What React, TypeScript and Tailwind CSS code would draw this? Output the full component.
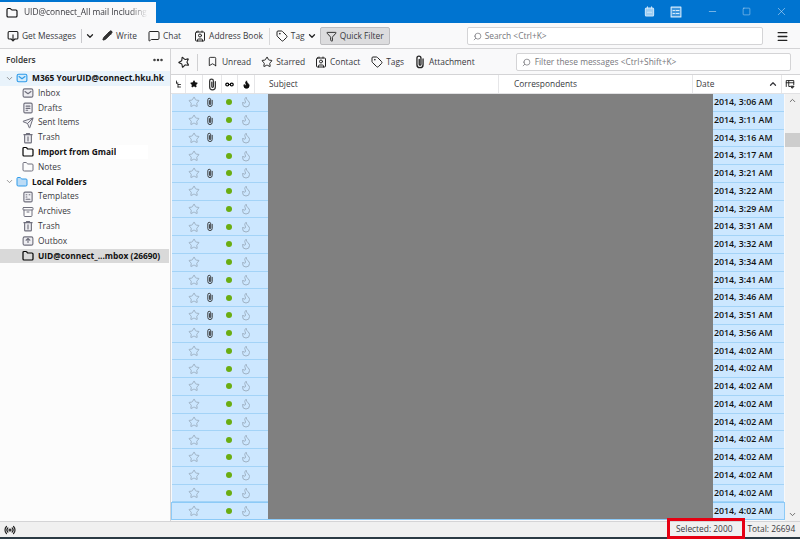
import React from 'react';
import {
  Archive, ChevronDown, ChevronUp, Filter, Flame, Folder, Menu, MessageSquare, Minus, MoreHorizontal,
  Pencil, Search, Send, Square, Star, Tag, X, Bookmark, Contact, Radio,
} from 'lucide-react';

const FONT = 'font-["Open_Sans","Liberation_Sans",sans-serif]';

const messages: { time: string; clip?: boolean }[] = [
  { time: '3:06 AM', clip: true },
  { time: '3:11 AM', clip: true },
  { time: '3:16 AM', clip: true },
  { time: '3:17 AM' },
  { time: '3:21 AM', clip: true },
  { time: '3:22 AM' },
  { time: '3:29 AM' },
  { time: '3:31 AM', clip: true },
  { time: '3:32 AM' },
  { time: '3:34 AM' },
  { time: '3:41 AM', clip: true },
  { time: '3:46 AM', clip: true },
  { time: '3:51 AM', clip: true },
  { time: '3:56 AM', clip: true },
  ...Array.from({ length: 10 }, () => ({ time: '4:02 AM' })),
];

// small hand drawn icons, the packages have nothing close for these
function Clip({ size = 11, className }: { size?: number; className?: string }) {
  return (
    <svg width={size} height={size} viewBox="0 0 16 16" fill="none" stroke="currentColor" strokeWidth="1.5" strokeLinecap="round" className={className}>
      <path d="M11.5 4.5V11a3.5 3.5 0 0 1-7 0V3.6a2.3 2.3 0 0 1 4.6 0V10.5a1 1 0 0 1-2 0V5" />
    </svg>
  );
}

function Box({ size = 12, className, children }: { size?: number; className?: string; children: React.ReactNode }) {
  return (
    <svg width={size} height={size} viewBox="0 0 16 16" fill="none" stroke="currentColor" strokeWidth="1.5" strokeLinejoin="round" strokeLinecap="round" className={className}>
      {children}
    </svg>
  );
}

const InboxIcon = () => (
  <Box className="text-[#6f6f7c]">
    <rect x="1.5" y="2.5" width="13" height="11" rx="2" fill="#eeeef2" />
    <path d="M4 6l4 3 4-3" />
  </Box>
);
const DraftIcon = () => (
  <Box className="text-[#6f6f7c]">
    <rect x="2.5" y="1.5" width="11" height="13" rx="1.5" fill="#eeeef2" />
    <path d="M5.5 5.5h5M5.5 8.5h5M5.5 11h2" />
  </Box>
);
const TrashIcon = () => (
  <Box className="text-[#6f6f7c]">
    <path d="M2.5 3.5h11M6 3.5V2h4v1.5" />
    <rect x="3.5" y="3.5" width="9" height="11" rx="1" fill="#eeeef2" />
    <path d="M8 6.5v5.5" />
  </Box>
);
const TemplateIcon = () => (
  <Box className="text-[#6f6f7c]">
    <rect x="2.5" y="1.5" width="11" height="13" rx="1.5" fill="#eeeef2" />
    <path d="M5.5 5h1M9.5 5h1M5.5 8h1M5.5 11h5" />
  </Box>
);
const OutboxIcon = () => (
  <Box className="text-[#6f6f7c]">
    <rect x="1.5" y="2.5" width="13" height="11" rx="2" fill="#eeeef2" />
    <path d="M8 10V5M5.5 7L8 4.5 10.5 7" />
  </Box>
);

export default function App() {
  const dark = 'text-[#222]';
  return (
    <div className={`flex h-[539px] w-[800px] flex-col overflow-hidden bg-[#f9f9fa] ${FONT}`}>
      {/* title bar */}
      <div className="flex h-[23px] shrink-0 items-end bg-[#0074d0] text-white">
        <div className="flex h-[21px] w-[156px] items-center gap-[6px] bg-[#f9f9fa] pl-[6px] text-[8.4px] text-[#38383d]">
          <Folder size={12} strokeWidth={2.2} className="text-black" />
          <span className="w-[124px] overflow-hidden whitespace-nowrap [mask-image:linear-gradient(to_right,black_85%,transparent)]">
            UID@connect_All mail Including
          </span>
        </div>
        <div className="flex h-[23px] flex-1 items-center">
          <Box size={11} className="ml-[488px] text-[#cde6fa]">
            <rect x="2" y="3" width="12" height="11.5" rx="1.5" fill="#9ccdf2" />
            <path d="M5 1v3M11 1v3M5 9h6" />
          </Box>
          <Box size={12} className="ml-[15px] text-[#d6ebfb]">
            <rect x="1.5" y="1.5" width="13" height="13" fill="#3f97de" />
            <path d="M4 6h2M8 6h4M4 10h2M8 10h4" />
          </Box>
          <Minus size={11} strokeWidth={1} className="ml-[25px]" />
          <Square size={9} strokeWidth={1} className="ml-[24px]" />
          <X size={13} strokeWidth={1} className="ml-[24px] text-[#cfe4f7]" />
        </div>
      </div>

      {/* main toolbar */}
      <div className="flex h-[26px] shrink-0 items-center border-b border-[#d4d4d6] pl-[7px] pt-[1px] text-[8.4px] text-[#38383d]">
        <div className="flex items-center gap-[3px]">
          <Box size={12} className={dark}>
            <path d="M5 12H3a1.5 1.5 0 0 1-1.5-1.5v-7A1.5 1.5 0 0 1 3 2h10a1.5 1.5 0 0 1 1.5 1.5v7A1.5 1.5 0 0 1 13 12h-2" />
            <path d="M8 6.5v8M5.5 12L8 14.500 10.500 12" />
          </Box>
          <span>Get Messages</span>
        </div>
        <div className="ml-[5px] h-[14px] w-px bg-[#c8c8cc]" />
        <ChevronDown size={10} strokeWidth={3} className={`ml-[3px] ${dark}`} />
        <div className="ml-[7px] flex items-center gap-[3px]">
          <Pencil size={11} fill="#333" className={dark} />
          <span>Write</span>
        </div>
        <div className="ml-[11px] flex items-center gap-[3px]">
          <MessageSquare size={12} className={dark} />
          <span>Chat</span>
        </div>
        <div className="ml-[13px] flex items-center gap-[3px]">
          <Contact size={12} className={dark} />
          <span>Address Book</span>
        </div>
        <div className="ml-[6px] h-[17px] w-px bg-[#d8d8da]" />
        <div className="ml-[6px] flex items-center gap-[3px]">
          <Tag size={12} className={dark} />
          <span>Tag</span>
        </div>
        <ChevronDown size={10} strokeWidth={3} className={`ml-[2px] ${dark}`} />
        <div className="ml-[3px] flex h-[18px] w-[70px] items-center gap-[3px] rounded-[2px] border border-[#bdbdc0] bg-[#dcdcde] pl-[5px]">
          <Filter size={11} className={dark} />
          <span>Quick Filter</span>
        </div>
        <div className="ml-[77px] flex h-[18px] w-[296px] items-center gap-[3px] rounded-[2px] border border-[#d4d4d6] bg-white pl-[5px] text-[#77777c]">
          <Search size={9} className="-scale-x-100" />
          <span>Search &lt;Ctrl+K&gt;</span>
        </div>
        <Menu size={13} strokeWidth={2.4} className={`ml-[13px] ${dark}`} />
      </div>

      <div className="flex min-h-0 flex-1">
        {/* folder pane */}
        <div className="flex w-[171px] shrink-0 flex-col border-r border-[#d4d4d6] bg-[#fcfcfc] text-[8.4px] text-[#38383d]">
          <div className="flex h-[22px] shrink-0 items-center justify-between px-[6px] font-semibold text-[#333]">
            <span>Folders</span>
            <MoreHorizontal size={12} strokeWidth={3} className="text-[#333]" />
          </div>
          <div className="flex h-[14.8px] items-center bg-[#e9f3fb] pl-[5px] font-bold text-[#111]">
            <ChevronDown size={9} className="mr-[2px] text-[#777]" />
            <Box size={12} className="mr-[4px] text-[#2e9bea]">
              <rect x="1.5" y="3" width="13" height="10" rx="2" fill="#d3ebfb" />
              <path d="M4 6l4 3 4-3" />
            </Box>
            <span>M365 YourUID@connect.hku.hk</span>
          </div>
          <div className="flex h-[14.8px] items-center gap-[4px] pl-[22px]"><InboxIcon /><span>Inbox</span></div>
          <div className="flex h-[14.8px] items-center gap-[4px] pl-[22px]"><DraftIcon /><span>Drafts</span></div>
          <div className="flex h-[14.8px] items-center gap-[4px] pl-[22px]"><Send size={12} fill="#eeeef2" className="text-[#6f6f7c]" /><span>Sent Items</span></div>
          <div className="flex h-[14.8px] items-center gap-[4px] pl-[22px]"><TrashIcon /><span>Trash</span></div>
          <div className="flex h-[14.8px] items-center gap-[4px] pl-[22px] font-bold text-[#111]">
            <Folder size={12} strokeWidth={2.4} className="text-black" />
            <span>Import from Gmail</span>
            <span className="-ml-[4px] h-[14px] w-[32px] bg-white" />
          </div>
          <div className="flex h-[14.8px] items-center gap-[4px] pl-[22px]"><Folder size={12} className="text-[#6f6f7c]" /><span>Notes</span></div>
          <div className="flex h-[14.8px] items-center pl-[5px] font-bold text-[#111]">
            <ChevronDown size={9} className="mr-[2px] text-[#777]" />
            <Folder size={12} fill="#bcdcf6" className="mr-[4px] text-[#2e9bea]" />
            <span>Local Folders</span>
          </div>
          <div className="flex h-[14.8px] items-center gap-[4px] pl-[22px]"><TemplateIcon /><span>Templates</span></div>
          <div className="flex h-[14.8px] items-center gap-[4px] pl-[22px]"><Archive size={12} className="text-[#6f6f7c]" /><span>Archives</span></div>
          <div className="flex h-[14.8px] items-center gap-[4px] pl-[22px]"><TrashIcon /><span>Trash</span></div>
          <div className="flex h-[14.8px] items-center gap-[4px] pl-[22px]"><OutboxIcon /><span>Outbox</span></div>
          <div className="mr-[1px] flex h-[14.8px] items-center gap-[4px] bg-[#d9d9d9] pl-[22px] font-bold text-[#111]">
            <Folder size={12} strokeWidth={2.4} className="text-black" />
            <span>UID@connect_...mbox (26690)</span>
          </div>
        </div>

        {/* message pane */}
        <div className="flex min-w-0 flex-1 flex-col">
          <div className="flex h-[26px] shrink-0 items-center border-b border-[#d4d4d6] pl-[7px] pt-[1px] text-[8.4px] text-[#38383d]">
            <Star size={12} strokeWidth={2.2} className={`-rotate-[20deg] ${dark}`} />
            <div className="ml-[7px] h-[17px] w-px bg-[#d0d0d2]" />
            <div className="ml-[9px] flex items-center gap-[4px]">
              <Bookmark size={11} className={dark} />
              <span>Unread</span>
            </div>
            <div className="ml-[10px] flex items-center gap-[3px]">
              <Star size={12} className={dark} />
              <span>Starred</span>
            </div>
            <div className="ml-[10px] flex items-center gap-[3px]">
              <Contact size={12} className={dark} />
              <span>Contact</span>
            </div>
            <div className="ml-[11px] flex items-center gap-[3px]">
              <Tag size={12} className={dark} />
              <span>Tags</span>
            </div>
            <div className="ml-[9px] flex items-center gap-[2px]">
              <Clip size={14} className={dark} />
              <span>Attachment</span>
            </div>
            <div className="ml-[41px] flex h-[18px] w-[275px] items-center gap-[4px] rounded-[2px] border border-[#d4d4d6] bg-white pl-[5px] text-[#77777c]">
              <Search size={9} className="-scale-x-100" />
              <span>Filter these messages &lt;Ctrl+Shift+K&gt;</span>
            </div>
          </div>

          {/* column headers */}
          <div className="flex h-[19px] shrink-0 items-center border-b border-[#e2e2e4] bg-white text-[8.4px] text-[#38383d]">
            <div className="flex h-full w-[15px] items-center justify-center border-r border-[#e6e6e8]">
              <Box size={8} className="text-black">
                <path d="M5 2v4l3 3v5M8 9h5M5 6h3M8 14h5" />
              </Box>
            </div>
            <div className="flex h-full w-[17px] items-center justify-center border-r border-[#e6e6e8]"><Star size={8} fill="#111" className="text-black" /></div>
            <div className="flex h-full w-[19px] items-center justify-center border-r border-[#e6e6e8]"><Clip size={13} className="text-[#333]" /></div>
            <div className="flex h-full w-[16px] items-center justify-center border-r border-[#e6e6e8]">
              <Box size={9} className="text-black">
                <circle cx="4" cy="8" r="2.6" strokeWidth="2.2" />
                <circle cx="12" cy="8" r="2.6" strokeWidth="2.2" />
                <path d="M6 8h4" />
              </Box>
            </div>
            <div className="flex h-full w-[17px] items-center justify-center border-r border-[#e6e6e8]"><Flame size={9} fill="#111" className="text-black" /></div>
            <div className="flex h-full w-[244px] items-center border-r border-[#e6e6e8] pl-[14px]">Subject</div>
            <div className="flex h-full w-[194px] items-center border-r border-[#e6e6e8] pl-[15px]">Correspondents</div>
            <div className="flex h-full w-[89px] items-center justify-between border-r border-[#e6e6e8] pl-[3px] pr-[3px]">
              <span>Date</span>
              <ChevronUp size={10} strokeWidth={3} />
            </div>
            <Box size={10} className="ml-[3px] text-[#222]">
              <path d="M2 12V2.500h12V9M2 6h12M6 2.500V12h2" />
              <path d="M9.500 11.500h5L12 14.500z" fill="currentColor" />
            </Box>
          </div>

          <div className="flex min-h-0 flex-1">
            <div className="min-w-0 flex-1">
              {messages.map((m, i) => {
                const last = i === messages.length - 1;
                return (
                  <div key={i} className={`flex h-[17.75px] items-stretch ${last ? 'border border-[#8ccaf7]' : 'pl-[1px]'}`}>
                    <div className={`flex w-[96px] items-center bg-[#cce7ff] ${last ? '' : 'border-b border-[#a3d3f7]'}`}>
                      <Star size={12} className="ml-[16px] text-[#9fb2c4]" />
                      <span className="ml-[5px] flex w-[10px] justify-center">
                        {m.clip && <Clip size={13} className="text-[#333]" />}
                      </span>
                      <span className="ml-[11px] h-[6px] w-[6px] rounded-full bg-[#6bad12]" />
                      <Flame size={12} className="ml-[8px] text-[#9fb2c4]" />
                    </div>
                    <div className={`w-[445px] bg-[#808080] ${last ? 'relative -mt-[1px]' : ''}`} />
                    <div className={`w-[71px] whitespace-nowrap bg-[#cce7ff] pl-[1px] text-[8.8px] font-semibold leading-[17px] text-[#111] ${last ? '' : 'border-b border-[#a3d3f7]'}`}>
                      2014, {m.time}
                    </div>
                  </div>
                );
              })}
            </div>
            {/* scrollbar */}
            <div className="relative w-[15px] shrink-0 bg-[#f1f1f1]">
              <ChevronUp size={9} strokeWidth={2.5} className="absolute left-[3px] top-[2px] text-[#666]" />
              <div className="absolute left-0 top-[39px] h-[14px] w-[15px] bg-[#cdcdcd]" />
              <ChevronDown size={9} strokeWidth={2.5} className="absolute bottom-[2px] left-[3px] text-[#666]" />
            </div>
          </div>
        </div>
      </div>

      {/* status bar */}
      <div className="relative flex h-[16px] shrink-0 items-center border-t border-[#d4d4d6] bg-[#f0f0f0] pl-[4px] text-[8.4px] text-[#38383d]">
        <Radio size={12} strokeWidth={2.4} className="text-[#222]" />
        <span className="ml-[660px]">Selected: 2000</span>
        <span className="ml-[15px]">Total: 26694</span>
        {/* red annotation drawn on top of the screenshot */}
        <div className="absolute left-[667px] top-[-4px] h-[21px] w-[78px] border-[3px] border-[#e60012]" />
      </div>
      <div className="h-[2px] shrink-0 bg-[#2b3a44]" />
    </div>
  );
}
